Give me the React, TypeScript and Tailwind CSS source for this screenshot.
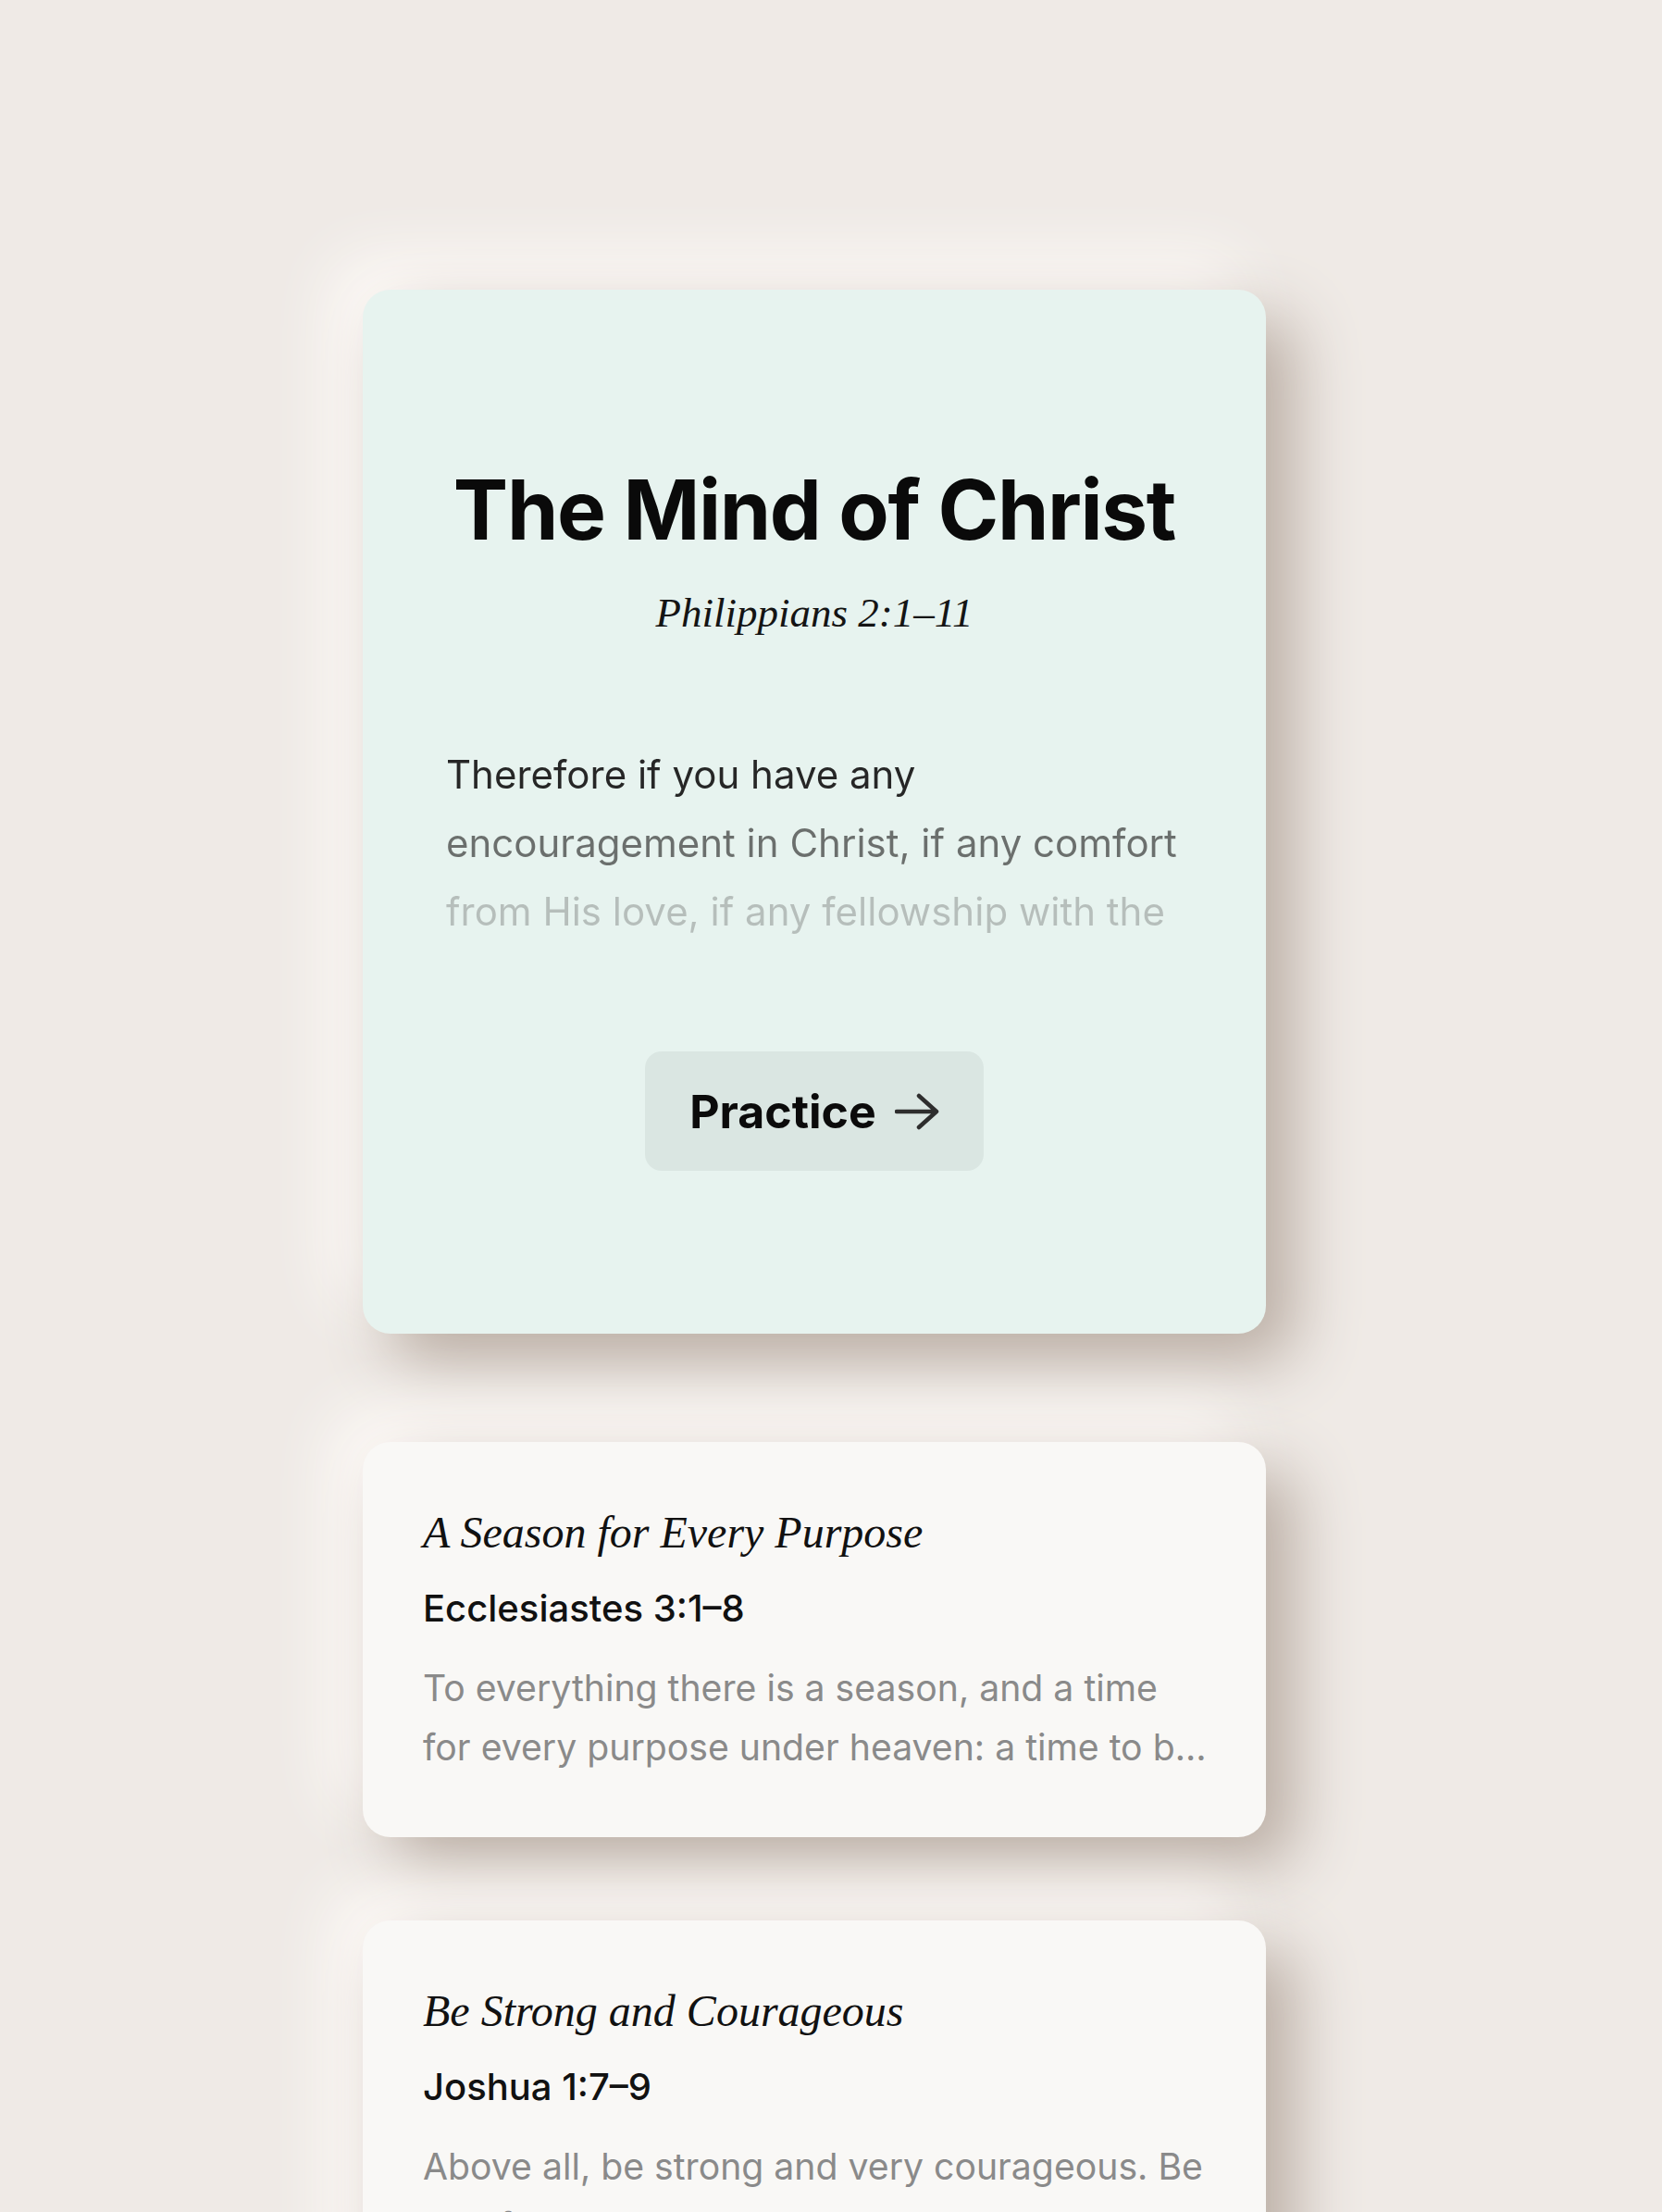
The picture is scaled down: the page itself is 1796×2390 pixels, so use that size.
interface Passage {
  title: string;
  reference: string;
  excerpt: string;
}

const passages: Passage[] = [
  {
    title: 'A Season for Every Purpose',
    reference: 'Ecclesiastes 3:1–8',
    excerpt:
      'To everything there is a season, and a time for every purpose under heaven: a time to be born, and a time to die; a time to plant, and a time to pluck what is planted.',
  },
  {
    title: 'Be Strong and Courageous',
    reference: 'Joshua 1:7–9',
    excerpt:
      'Above all, be strong and very courageous. Be careful to obey all the law that Moses My servant commanded you; do not turn from it to the right hand or to the left.',
  },
];

function ArrowRight() {
  return (
    <svg width="48" height="40" viewBox="0 0 48 40" fill="none" className="text-[#2e2e2e]">
      <path
        d="M2 20H45M26 3L45 20L26 37"
        stroke="currentColor"
        strokeWidth="4.5"
        strokeLinecap="round"
        strokeLinejoin="round"
      />
    </svg>
  );
}

function FeaturedCard() {
  return (
    <div className="w-[976px] rounded-[30px] bg-[#e7f3ef] pt-[193px] pb-[176px] px-[90px] flex flex-col items-center shadow-[30px_30px_70px_#b9aca2,-30px_-30px_70px_#fffcfa]">
      <h1 className="whitespace-nowrap text-[89px] leading-[90px] font-bold tracking-[-0.015em] text-[#0a0a0a] font-['Inter','Noto_Sans',sans-serif]">
        The Mind of Christ
      </h1>
      <p className="mt-[42px] text-[45px] leading-[48px] italic text-[#141414] font-['Liberation_Serif','DejaVu_Serif',serif]">
        Philippians 2:1–11
      </p>
      <p className="mt-[114px] w-full h-[222px] overflow-hidden text-[42px] leading-[74px] text-transparent bg-clip-text bg-[linear-gradient(to_bottom,#262626_0,#262626_74px,#6b6f6d_74px,#6b6f6d_148px,#b6bebb_148px)] font-['Inter','Noto_Sans',sans-serif]">
        Therefore if you have any encouragement in Christ, if any comfort from His love, if any fellowship with the
        Spirit, if any affection and mercy, fulfill my joy by being like-minded.
      </p>
      <button className="mt-[114px] w-[366px] h-[129px] rounded-[18px] bg-[#dae6e2] flex items-center justify-center gap-[20px] font-['Inter','Noto_Sans',sans-serif]">
        <span className="text-[50px] leading-none font-bold text-[#0b0b0b]">Practice</span>
        <ArrowRight />
      </button>
    </div>
  );
}

function PassageCard({ p }: { p: Passage }) {
  return (
    <div className="w-[976px] rounded-[30px] bg-[#f9f8f6] pt-[74px] pb-[65px] pl-[65px] pr-[56px] shadow-[30px_30px_70px_#b9aca2,-30px_-30px_70px_#fffcfa]">
      <h2 className="text-[48px] leading-none italic text-[#111] font-['Liberation_Serif','DejaVu_Serif',serif]">
        {p.title}
      </h2>
      <p className="mt-[38px] text-[40px] leading-none font-medium text-[#111] font-['Inter','Noto_Sans',sans-serif]">
        {p.reference}
      </p>
      <p className="mt-[34px] text-[39.2px] leading-[64px] text-[#8a8a8a] line-clamp-2 font-['Inter','Noto_Sans',sans-serif]">
        {p.excerpt}
      </p>
    </div>
  );
}

export default function App() {
  return (
    <div className="w-[1796px] h-[2390px] overflow-hidden bg-[#efeae6] pl-[392px] pt-[313px]">
      <FeaturedCard />
      <div className="mt-[117px] flex flex-col gap-[90px]">
        {passages.map((p) => (
          <PassageCard key={p.title} p={p} />
        ))}
      </div>
    </div>
  );
}
